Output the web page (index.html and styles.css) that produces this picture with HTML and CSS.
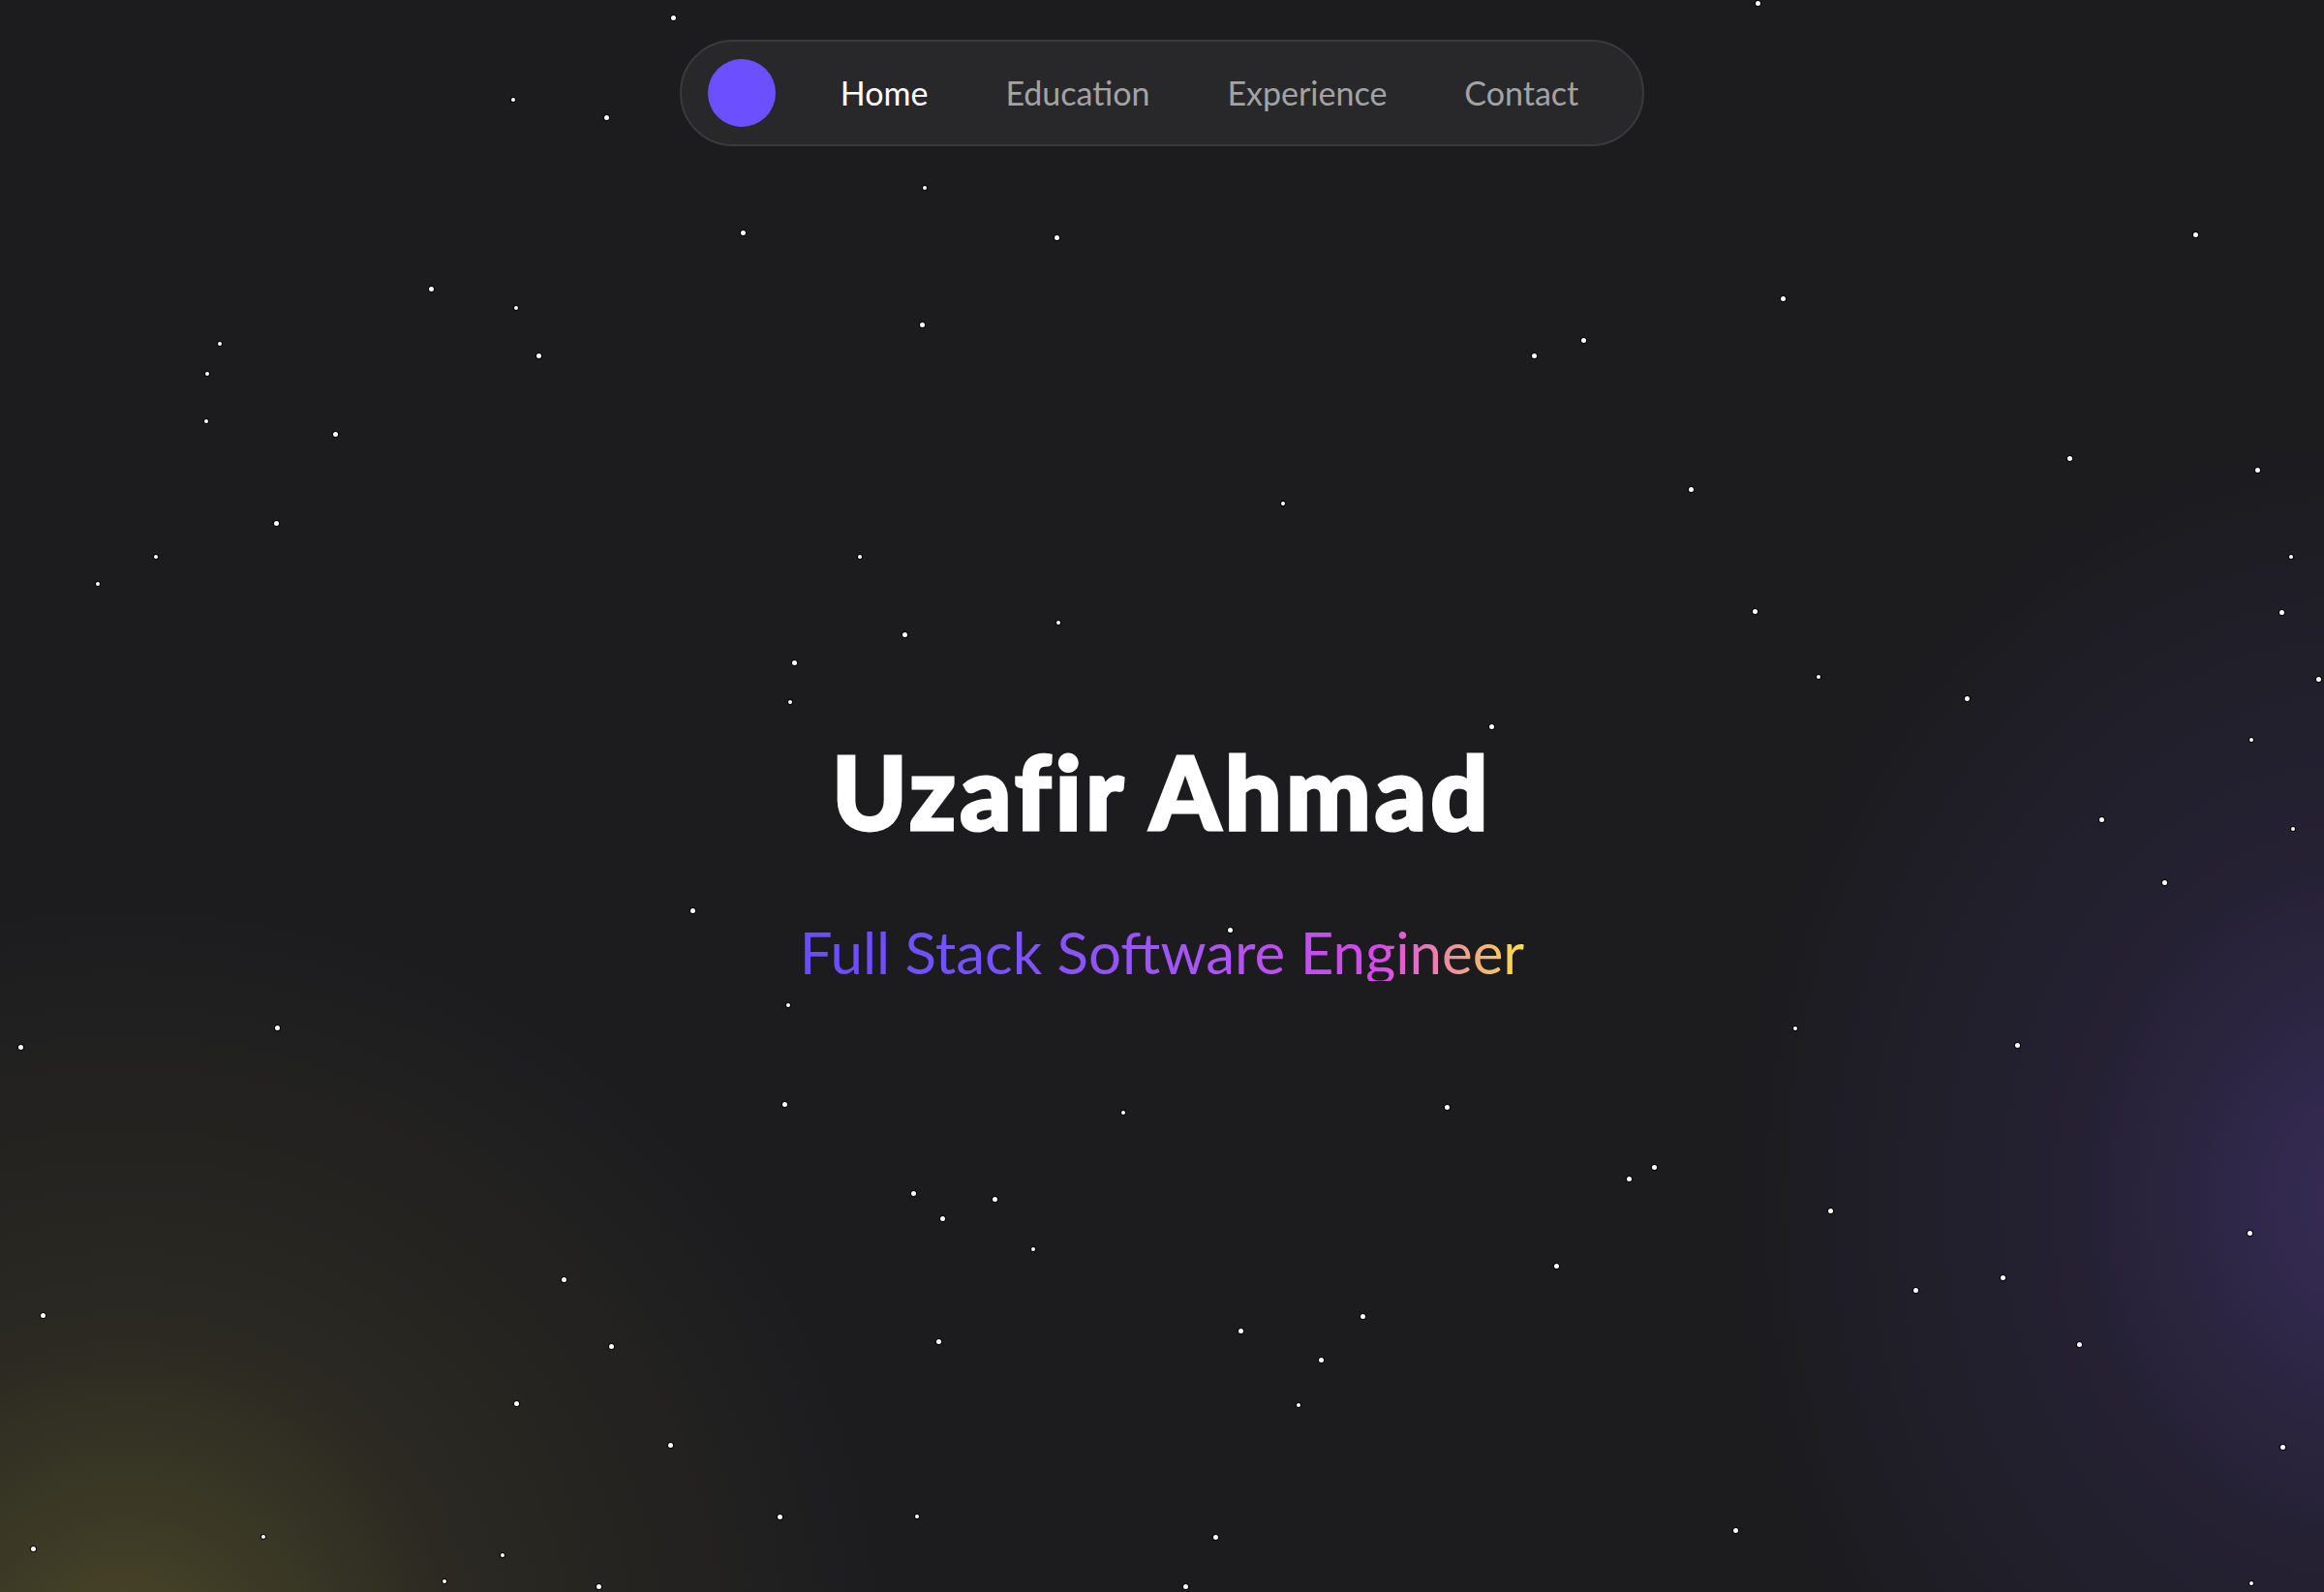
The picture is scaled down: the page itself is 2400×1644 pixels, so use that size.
FILE: index.html
```html
<!DOCTYPE html>
<html lang="en">
<head>
<meta charset="utf-8">
<title>Uzafir Ahmad</title>
<link rel="stylesheet" href="styles.css">
</head>
<body>
<div class="page">
  <div class="stars" aria-hidden="true">
    <i class="s" style="left:695px;top:18px"></i>
    <i class="s" style="left:1815px;top:3px"></i>
    <i class="s sm" style="left:530px;top:103px"></i>
    <i class="s" style="left:626px;top:121px"></i>
    <i class="s sm" style="left:955px;top:194px"></i>
    <i class="s" style="left:767px;top:240px"></i>
    <i class="s" style="left:1091px;top:245px"></i>
    <i class="s" style="left:2267px;top:242px"></i>
    <i class="s" style="left:445px;top:298px"></i>
    <i class="s sm" style="left:533px;top:318px"></i>
    <i class="s" style="left:952px;top:335px"></i>
    <i class="s" style="left:1841px;top:308px"></i>
    <i class="s sm" style="left:227px;top:355px"></i>
    <i class="s" style="left:556px;top:367px"></i>
    <i class="s" style="left:1584px;top:367px"></i>
    <i class="s" style="left:1635px;top:351px"></i>
    <i class="s sm" style="left:214px;top:386px"></i>
    <i class="s sm" style="left:213px;top:435px"></i>
    <i class="s" style="left:346px;top:448px"></i>
    <i class="s" style="left:1746px;top:505px"></i>
    <i class="s" style="left:2137px;top:473px"></i>
    <i class="s" style="left:2331px;top:485px"></i>
    <i class="s sm" style="left:1325px;top:520px"></i>
    <i class="s" style="left:285px;top:540px"></i>
    <i class="s sm" style="left:161px;top:575px"></i>
    <i class="s sm" style="left:888px;top:575px"></i>
    <i class="s sm" style="left:101px;top:603px"></i>
    <i class="s sm" style="left:2366px;top:575px"></i>
    <i class="s" style="left:1812px;top:631px"></i>
    <i class="s" style="left:2356px;top:632px"></i>
    <i class="s" style="left:934px;top:655px"></i>
    <i class="s sm" style="left:1093px;top:643px"></i>
    <i class="s" style="left:820px;top:684px"></i>
    <i class="s sm" style="left:1878px;top:699px"></i>
    <i class="s" style="left:2394px;top:701px"></i>
    <i class="s sm" style="left:816px;top:725px"></i>
    <i class="s" style="left:2031px;top:721px"></i>
    <i class="s" style="left:1540px;top:750px"></i>
    <i class="s sm" style="left:2325px;top:764px"></i>
    <i class="s" style="left:2170px;top:846px"></i>
    <i class="s sm" style="left:2368px;top:856px"></i>
    <i class="s" style="left:2235px;top:911px"></i>
    <i class="s" style="left:715px;top:940px"></i>
    <i class="s" style="left:1270px;top:960px"></i>
    <i class="s sm" style="left:814px;top:1038px"></i>
    <i class="s" style="left:286px;top:1061px"></i>
    <i class="s sm" style="left:1854px;top:1062px"></i>
    <i class="s" style="left:21px;top:1081px"></i>
    <i class="s" style="left:2083px;top:1079px"></i>
    <i class="s" style="left:810px;top:1140px"></i>
    <i class="s sm" style="left:1160px;top:1149px"></i>
    <i class="s" style="left:1494px;top:1143px"></i>
    <i class="s" style="left:1708px;top:1205px"></i>
    <i class="s" style="left:1682px;top:1217px"></i>
    <i class="s" style="left:943px;top:1232px"></i>
    <i class="s" style="left:1027px;top:1238px"></i>
    <i class="s" style="left:973px;top:1258px"></i>
    <i class="s" style="left:1890px;top:1250px"></i>
    <i class="s" style="left:2323px;top:1273px"></i>
    <i class="s sm" style="left:1067px;top:1290px"></i>
    <i class="s" style="left:1607px;top:1307px"></i>
    <i class="s" style="left:2068px;top:1319px"></i>
    <i class="s" style="left:582px;top:1321px"></i>
    <i class="s" style="left:1978px;top:1332px"></i>
    <i class="s" style="left:44px;top:1358px"></i>
    <i class="s" style="left:1407px;top:1359px"></i>
    <i class="s" style="left:1281px;top:1374px"></i>
    <i class="s" style="left:969px;top:1385px"></i>
    <i class="s" style="left:631px;top:1390px"></i>
    <i class="s" style="left:2147px;top:1388px"></i>
    <i class="s" style="left:1364px;top:1404px"></i>
    <i class="s" style="left:533px;top:1449px"></i>
    <i class="s sm" style="left:1341px;top:1451px"></i>
    <i class="s" style="left:692px;top:1492px"></i>
    <i class="s" style="left:2357px;top:1494px"></i>
    <i class="s" style="left:805px;top:1566px"></i>
    <i class="s sm" style="left:947px;top:1566px"></i>
    <i class="s" style="left:1792px;top:1580px"></i>
    <i class="s sm" style="left:272px;top:1587px"></i>
    <i class="s" style="left:1255px;top:1587px"></i>
    <i class="s" style="left:34px;top:1599px"></i>
    <i class="s sm" style="left:519px;top:1606px"></i>
    <i class="s sm" style="left:459px;top:1633px"></i>
    <i class="s" style="left:618px;top:1638px"></i>
    <i class="s" style="left:1224px;top:1638px"></i>
    <i class="s sm" style="left:2325px;top:1635px"></i>
  </div>

  <header class="header">
    <nav class="nav">
      <span class="logo"></span>
      <a class="nav-link active" href="#">Home</a>
      <a class="nav-link" href="#">Education</a>
      <a class="nav-link" href="#">Experience</a>
      <a class="nav-link" href="#">Contact</a>
    </nav>
  </header>

  <main class="hero">
    <h1 class="name">Uzafir Ahmad</h1>
    <p class="role">Full Stack Software Engineer</p>
  </main>
</div>
</body>
</html>
```

FILE: styles.css
```css
* { box-sizing: border-box; }

html, body {
  margin: 0;
  padding: 0;
  background: #1c1c1f;
}

body {
  font-family: "Lato", "Noto Sans", "Liberation Sans", sans-serif;
  color: #ffffff;
}

.page {
  position: relative;
  width: 2400px;
  height: 1644px;
  overflow: hidden;
  background:
    radial-gradient(ellipse 640px 780px at 2440px 1240px, rgba(74, 56, 128, 0.58) 0%, rgba(58, 45, 100, 0.3) 45%, rgba(28, 28, 31, 0) 100%),
    radial-gradient(circle 800px at 130px 1720px, rgba(92, 88, 44, 0.72) 0%, rgba(70, 66, 38, 0.32) 45%, rgba(28, 28, 31, 0) 100%),
    #1c1c1f;
}

.stars {
  position: absolute;
  inset: 0;
  pointer-events: none;
}

.s {
  position: absolute;
  width: 5px;
  height: 5px;
  margin: -2px 0 0 -2px;
  border-radius: 50%;
  background: #ffffff;
  box-shadow: 0 0 0 1px rgba(0, 0, 0, 0.85);
}

.s.sm {
  width: 4px;
  height: 4px;
}

.header {
  position: relative;
  display: flex;
  justify-content: center;
  padding-top: 41px;
}

.nav {
  display: flex;
  align-items: center;
  height: 110px;
  padding: 0 26px 0 27px;
  background: #28282b;
  border: 2px solid #3a3a3e;
  border-radius: 55px;
}

.logo {
  width: 70px;
  height: 70px;
  border-radius: 50%;
  background: #6c4fff;
  margin-right: 27px;
}

.nav-link {
  padding: 0 40px;
  font-size: 34px;
  font-weight: 400;
  color: #a3a3a6;
  text-decoration: none;
  line-height: 1;
}

.nav-link.active {
  color: #ffffff;
}

.hero {
  position: relative;
  display: flex;
  flex-direction: column;
  align-items: center;
  padding-top: 614px;
}

.name {
  margin: 0;
  font-size: 104px;
  font-weight: 900;
  line-height: 1;
  letter-spacing: 4.2px;
  color: #ffffff;
  -webkit-text-stroke: 3px #ffffff;
}

.role {
  margin: 84px 0 0;
  font-size: 60px;
  font-weight: 400;
  line-height: 1;
  background: linear-gradient(90deg, #6a4cff 0%, #7452ff 25%, #a855f7 55%, #d946ef 80%, #fde047 100%);
  -webkit-background-clip: text;
  background-clip: text;
  color: transparent;
}
```
